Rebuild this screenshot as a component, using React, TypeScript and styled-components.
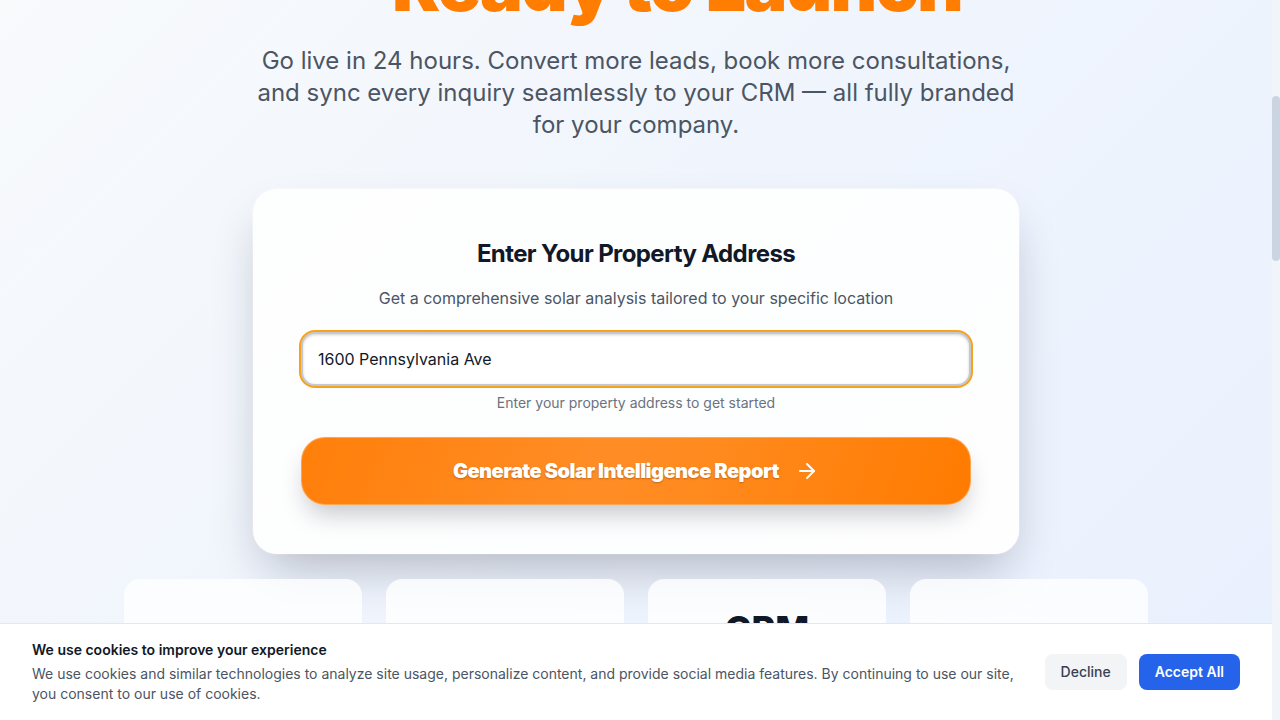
import React, { useLayoutEffect, useRef, useState } from "react";
import styled, { createGlobalStyle } from "styled-components";
import { ArrowRight } from "lucide-react";

const GlobalStyle = createGlobalStyle`
  html, body { margin: 0; padding: 0; height: 100%; overflow: hidden; }
  body {
    font-family: Inter, "Noto Sans", Arial, sans-serif;
    -webkit-font-smoothing: antialiased;
  }
  * { box-sizing: border-box; }
`;

const Frame = styled.div`
  display: flex;
  height: 100vh;
  background: linear-gradient(135deg, #f8fafc 0%, #f0f5fd 45%, #e9f0fe 100%);
`;

const Viewport = styled.div`
  position: relative;
  flex: 1;
  min-width: 0;
  height: 100%;
`;

const Scroller = styled.div`
  height: 100%;
  overflow-y: scroll;
  scrollbar-width: none;
  &::-webkit-scrollbar { display: none; }
`;

const Rail = styled.div`
  position: relative;
  width: 8px;
  flex: none;
  background: #f1f5f9;
`;

const Thumb = styled.div`
  position: absolute;
  left: 0;
  right: 0;
  border-radius: 4px;
  background: #cbd5e1;
`;

const Page = styled.div`
  min-height: 3142px;
  display: flex;
  flex-direction: column;
  align-items: center;
  padding: 226px 24px 0;
`;

const Hero = styled.section`
  display: flex;
  flex-direction: column;
  align-items: center;
  text-align: center;
  width: 100%;
`;

const Badge = styled.div`
  display: inline-flex;
  align-items: center;
  gap: 8px;
  padding: 8px 16px;
  border-radius: 999px;
  background: #fff7ed;
  color: #c2410c;
  font-size: 14px;
  font-weight: 600;
  margin-bottom: 32px;
`;

const Title = styled.h1`
  margin: 0 0 23px;
  font-size: 72px;
  line-height: 1.05;
  font-weight: 900;
  letter-spacing: -0.025em;
  color: #111827;
`;

const Accent = styled.span`
  display: block;
  padding-left: 82px;
  color: #ff7d00;
`;

const Lead = styled.p`
  margin: 0 0 48px;
  max-width: 768px;
  font-size: 24px;
  line-height: 32px;
  color: #4b5563;
  font-weight: 400;
`;

const Card = styled.div`
  width: 766px;
  padding: 49px 48px 49px;
  border-radius: 24px;
  background: linear-gradient(135deg, rgba(255,255,255,0.85), rgba(255,255,255,0.96));
  box-shadow: 0 25px 50px -12px rgba(15, 23, 42, 0.28), 0 0 0 1px rgba(255,255,255,0.5);
  display: flex;
  flex-direction: column;
  align-items: stretch;
  text-align: center;
`;

const CardTitle = styled.h2`
  margin: 0 0 16px;
  font-size: 24px;
  line-height: 32px;
  font-weight: 700;
  letter-spacing: -0.025em;
  color: #111827;
`;

const CardText = styled.p`
  margin: 0 0 22px;
  font-size: 16px;
  line-height: 24px;
  color: #4b5563;
`;

const AddressInput = styled.input`
  width: 100%;
  height: 54px;
  padding: 0 15px;
  border-radius: 14px;
  border: 2px solid #c4c9d1;
  box-shadow: 0 0 0 2px #f8a21c, inset 0 1px 3px rgba(0,0,0,0.18);
  font-family: Inter, Arial, sans-serif;
  font-size: 16px;
  color: #111827;
  background: #fff;
  outline: none;
`;

const Helper = styled.p`
  margin: 7px 0 24px;
  font-size: 14px;
  line-height: 20px;
  color: #6b7280;
`;

const Cta = styled.button`
  height: 68px;
  border-radius: 24px;
  border: 1px solid rgba(255, 170, 90, 0.9);
  background: linear-gradient(110deg, #ff7f0a 0%, #ff8d26 45%, #ff8a1e 60%, #ff7b00 100%);
  color: #fff;
  font-family: Inter, Arial, sans-serif;
  font-size: 20px;
  line-height: 28px;
  font-weight: 900;
  letter-spacing: -0.025em;
  text-shadow: 0 1px 2px rgba(0,0,0,0.25);
  display: flex;
  align-items: center;
  justify-content: center;
  gap: 16px;
  box-shadow: 0 14px 24px -6px rgba(15, 23, 42, 0.25);
  cursor: pointer;
`;

const Features = styled.div`
  margin-top: 25px;
  width: 1024px;
  display: grid;
  grid-template-columns: repeat(4, 1fr);
  gap: 24px;
`;

const Feature = styled.div<{ $offset: number }>`
  min-height: 200px;
  border-radius: 16px;
  background: rgba(255,255,255,0.8);
  padding: 24px;
  padding-top: ${(p) => p.$offset}px;
  display: flex;
  flex-direction: column;
  align-items: center;
  text-align: center;
`;

const Stat = styled.div`
  font-size: 36px;
  line-height: 40px;
  font-weight: 800;
  color: #111827;
  margin-bottom: 8px;
`;

const FeatureLabel = styled.div`
  font-size: 14px;
  font-weight: 600;
  color: #374151;
`;

const Banner = styled.div`
  position: absolute;
  left: 0;
  right: 0;
  bottom: 0;
  background: #fff;
  border-top: 1px solid #e5e7eb;
  padding: 16px 32px;
  display: flex;
  align-items: center;
  gap: 24px;
  z-index: 10;
`;

const BannerText = styled.div`
  flex: 1;
`;

const BannerTitle = styled.div`
  font-size: 14px;
  line-height: 20px;
  font-weight: 600;
  color: #111827;
  margin-bottom: 4px;
`;

const BannerBody = styled.p`
  margin: 0;
  font-size: 14px;
  line-height: 20px;
  color: #4b5563;
`;

const Actions = styled.div`
  display: flex;
  gap: 12px;
`;

const BannerButton = styled.button<{ $primary?: boolean }>`
  padding: 8px 16px;
  border: none;
  border-radius: 8px;
  font-family: Inter, Arial, sans-serif;
  font-size: 14px;
  line-height: 20px;
  font-weight: ${(p) => (p.$primary ? 600 : 500)};
  background: ${(p) => (p.$primary ? "#2563eb" : "#f3f4f6")};
  color: ${(p) => (p.$primary ? "#ffffff" : "#374151")};
  cursor: pointer;
`;

export default function App() {
  const scrollRef = useRef<HTMLDivElement>(null);
  const cardRef = useRef<HTMLDivElement>(null);
  const [thumb, setThumb] = useState({ top: 0, height: 0 });

  const measure = () => {
    const sc = scrollRef.current;
    if (!sc) return;
    const { scrollTop, scrollHeight, clientHeight } = sc;
    const height = Math.max(24, (clientHeight * clientHeight) / scrollHeight);
    const max = scrollHeight - clientHeight;
    const top = max > 0 ? (scrollTop / max) * (clientHeight - height) : 0;
    setThumb({ top, height });
  };

  useLayoutEffect(() => {
    const sc = scrollRef.current;
    const el = cardRef.current;
    if (!sc || !el) return;
    const top = el.getBoundingClientRect().top - sc.getBoundingClientRect().top + sc.scrollTop;
    sc.scrollTop = top - 189;
    measure();
  }, []);

  return (
    <>
      <GlobalStyle />
      <Frame>
        <Viewport>
          <Scroller ref={scrollRef} onScroll={measure}>
            <Page>
              <Hero>
                <Badge>☀ Your AI Solar Assistant</Badge>
                <Title>
                  Your Solar Lead Engine,
                  <Accent>Ready to Launch</Accent>
                </Title>
                <Lead>
                  Go live in 24 hours. Convert more leads, book more consultations, and sync every
                  inquiry seamlessly to your CRM — all fully branded for your company.
                </Lead>
                <Card ref={cardRef}>
                  <CardTitle>Enter Your Property Address</CardTitle>
                  <CardText>
                    Get a comprehensive solar analysis tailored to your specific location
                  </CardText>
                  <AddressInput defaultValue="1600 Pennsylvania Ave" />
                  <Helper>Enter your property address to get started</Helper>
                  <Cta>
                    Generate Solar Intelligence Report
                    <ArrowRight size={24} strokeWidth={2} />
                  </Cta>
                </Card>
              </Hero>
              <Features>
                <Feature $offset={60}>
                  <FeatureLabel>24-Hour Setup</FeatureLabel>
                </Feature>
                <Feature $offset={60}>
                  <FeatureLabel>Lead Conversion</FeatureLabel>
                </Feature>
                <Feature $offset={30}>
                  <Stat>CRM</Stat>
                  <FeatureLabel>Seamless Sync</FeatureLabel>
                </Feature>
                <Feature $offset={60}>
                  <FeatureLabel>Fully Branded</FeatureLabel>
                </Feature>
              </Features>
            </Page>
          </Scroller>
          <Banner>
            <BannerText>
              <BannerTitle>We use cookies to improve your experience</BannerTitle>
              <BannerBody>
                We use cookies and similar technologies to analyze site usage, personalize content,
                and provide social media features. By continuing to use our site, you consent to
                our use of cookies.
              </BannerBody>
            </BannerText>
            <Actions>
              <BannerButton>Decline</BannerButton>
              <BannerButton $primary>Accept All</BannerButton>
            </Actions>
          </Banner>
        </Viewport>
        <Rail>
          <Thumb style={{ top: thumb.top, height: thumb.height }} />
        </Rail>
      </Frame>
    </>
  );
}
